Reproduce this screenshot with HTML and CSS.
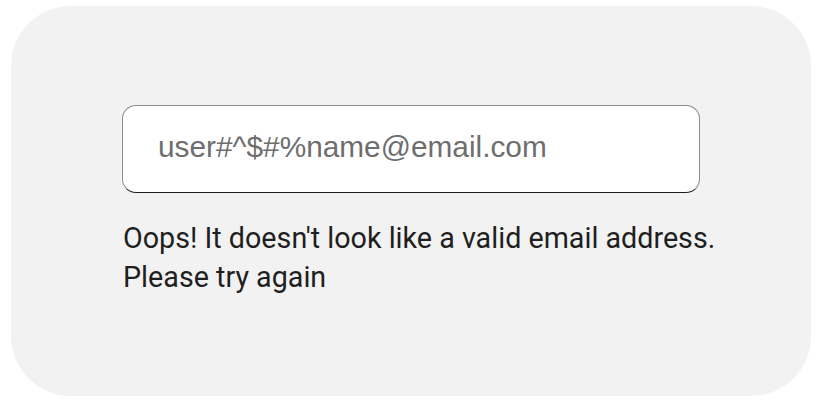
FILE: index.html
```html
<!DOCTYPE html>
<html lang="en">
<head>
<meta charset="utf-8">
<title>Email validation</title>
<link rel="stylesheet" href="styles.css">
</head>
<body>
<main class="card">
  <div class="field">
    <span class="field-value">user#^$#%name@email.com</span>
  </div>
  <p class="error">Oops! It doesn't look like a valid email address.<br>Please try again</p>
</main>
</body>
</html>
```

FILE: styles.css
```css
html, body {
  margin: 0;
  padding: 0;
  background: #ffffff;
}
body {
  width: 820px;
  height: 402px;
  overflow: hidden;
}
.card {
  box-sizing: border-box;
  margin: 6px 0 0 11px;
  width: 800px;
  height: 390px;
  border-radius: 60px;
  background: #f2f2f2;
  padding: 99px 0 0 111px;
  display: flex;
  flex-direction: column;
}
.field {
  box-sizing: border-box;
  width: 578px;
  height: 88px;
  border: 1px solid #8c8c8c;
  border-bottom-color: #1e1e1e;
  border-radius: 14px;
  background: #ffffff;
  display: flex;
  align-items: center;
  padding: 0 0 4px 35px;
}
.field-value {
  font-family: "Liberation Sans", Arial, sans-serif;
  font-size: 29.8px;
  color: #6e6e6e;
}
.error {
  margin: 26px 0 0 1px;
  font-family: Roboto, "Noto Sans", sans-serif;
  font-size: 28.7px;
  line-height: 39px;
  color: #1f1f1f;
}
```
